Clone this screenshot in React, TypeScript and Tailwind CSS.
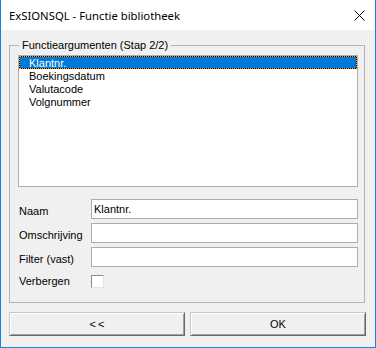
import React from "react";

const items = ["Klantnr.", "Boekingsdatum", "Valutacode", "Volgnummer"];

const fields = [
  { label: "Naam", value: "Klantnr." },
  { label: "Omschrijving", value: "" },
  { label: "Filter (vast)", value: "" },
];

const WinButton = ({ children }: { children: React.ReactNode }) => (
  <button className="w-[176px] h-[24px] flex items-center justify-center bg-[#f0f0f0] border border-t-[#c8c8c8] border-l-[#c8c8c8] border-r-[#696969] border-b-[#696969] shadow-[inset_1px_1px_0_#ffffff,inset_-1px_-1px_0_#a0a0a0] text-black leading-[13px]">
    {children}
  </button>
);

export default function App() {
  return (
    <div className="w-[376px] h-[348px] flex flex-col bg-[#f0f0f0] border-x border-b border-[#1883d7] font-['Liberation_Sans',Arial,sans-serif] text-[11px] text-black">
      {/* title bar */}
      <div className="h-[30px] shrink-0 bg-white flex items-center justify-between pl-[8px] pr-[10px] pt-[2px]">
        <span className="font-['Noto_Sans',sans-serif] text-[11.3px] leading-[16px] text-black">
          ExSIONSQL - Functie bibliotheek
        </span>
        <svg width="11" height="11" viewBox="0 0 11 11" className="mt-[-1px]">
          <path d="M0.5 0.5 L10.5 10.5 M10.5 0.5 L0.5 10.5" stroke="#000" strokeWidth="1" />
        </svg>
      </div>

      <div className="flex flex-col px-[8px]">
        <fieldset className="mt-[9px] w-[356px] border border-[#b4b4b4] pl-[8px] pr-[6px] pt-[3px] pb-[14px]">
          <legend className="ml-[1px] px-[3px] leading-[13px]">Functieargumenten (Stap 2/2)</legend>

          {/* list box */}
          <div className="w-[340px] h-[132px] border border-[#acacac] bg-white">
            {items.map((item, i) =>
              i === 0 ? (
                <div key={item} className="h-[13px] bg-black border border-dotted border-[#ff9c1a]">
                  <div className="h-full bg-[#0078d7] text-white pl-[9px] leading-[12px]">{item}</div>
                </div>
              ) : (
                <div key={item} className="h-[13px] pl-[10px] leading-[14px]">
                  {item}
                </div>
              )
            )}
          </div>

          <div className="mt-[12px] flex flex-col gap-[4px]">
            {fields.map((f) => (
              <div key={f.label} className="flex items-start">
                <span className="w-[73px] pl-[1px] mt-[6px] leading-[13px]">{f.label}</span>
                <div className="w-[267px] h-[20px] border border-[#acacac] bg-white flex items-center pl-[2px] leading-[13px]">
                  {f.value}
                </div>
              </div>
            ))}
          </div>

          <div className="mt-[7px] flex items-center">
            <span className="w-[73px] pl-[1px] leading-[13px] mt-[1px]">Verbergen</span>
            <div className="w-[13px] h-[13px] bg-white border border-t-[#8a8a8a] border-l-[#8a8a8a] border-r-[#e3e3e3] border-b-[#e3e3e3]" />
          </div>
        </fieldset>

        <div className="mt-[9px] flex gap-[5px]">
          <WinButton>
            <span className="tracking-[2px] pl-[2px]">&lt;&lt;</span>
          </WinButton>
          <WinButton>OK</WinButton>
        </div>
      </div>
    </div>
  );
}
